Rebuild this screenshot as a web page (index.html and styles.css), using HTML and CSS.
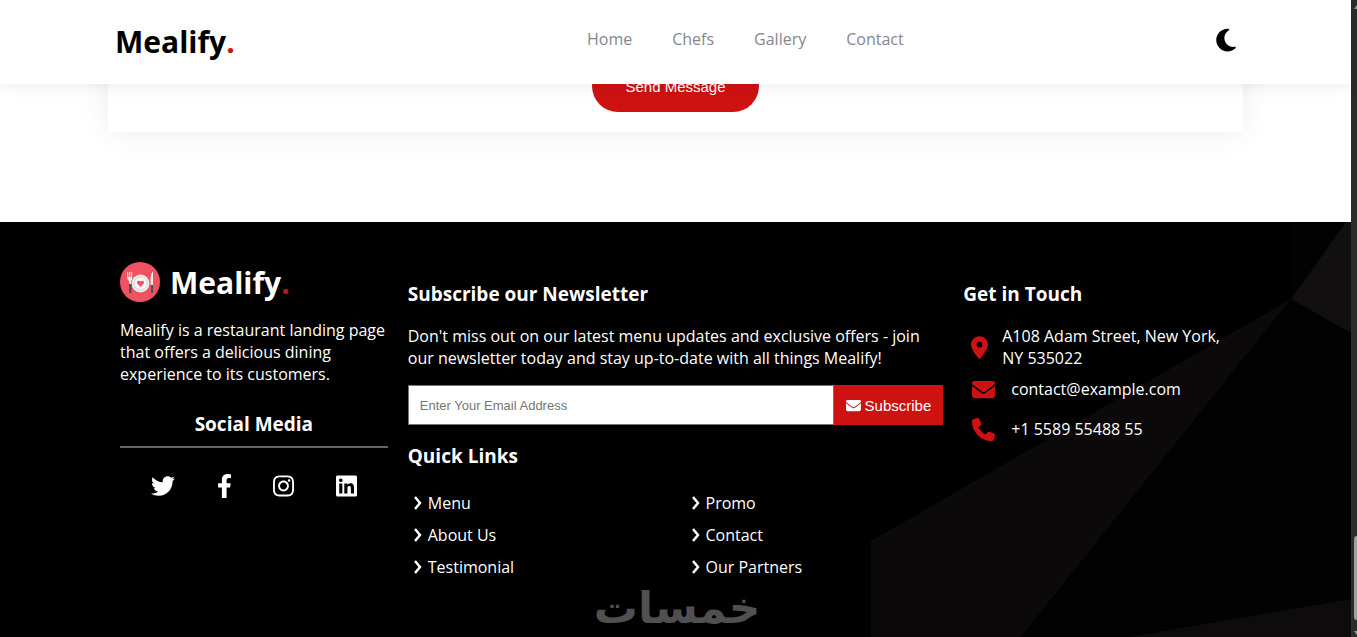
FILE: index.html
```html
<!DOCTYPE html>
<html lang="en">
<head>
<meta charset="utf-8">
<meta name="viewport" content="width=device-width, initial-scale=1">
<title>Mealify</title>
<link rel="stylesheet" href="styles.css">
</head>
<body>
<div class="page">
  <header class="header">
    <a class="brand" href="#home">Mealify<span class="dot">.</span></a>
    <nav class="nav">
      <a href="#home">Home</a>
      <a href="#chefs">Chefs</a>
      <a href="#gallery">Gallery</a>
      <a href="#contact">Contact</a>
    </nav>
    <button class="theme" type="button" aria-label="Dark mode">
      <svg viewBox="0 0 384 512" width="20" height="26"><path d="M223.5 32C100 32 0 132.3 0 256S100 480 223.500 480c60.600 0 115.500-24.200 155.800-63.400c5-4.900 6.300-12.500 3.100-18.700s-10.100-9.700-17-8.500c-9.800 1.700-19.800 2.600-30.100 2.600c-96.900 0-175.500-78.800-175.500-176c0-65.800 36-123.100 89.300-153.300c6.100-3.500 9.200-10.500 7.700-17.300s-7.300-11.900-14.300-12.500c-6.300-.5-12.600-.8-19-.8z"/></svg>
    </button>
  </header>

  <main class="contact" id="contact">
    <form class="card"><button class="send" type="button">Send Message</button></form>
  </main>

  <footer class="footer">
    <svg class="facets" viewBox="0 0 480 415" preserveAspectRatio="xMaxYMin slice" aria-hidden="true">
      <path fill="#0b090a" d="M0 319L420 77L150 415H0z"/>
      <path fill="#020202" d="M420 0H475L420 77z"/>
      <path fill="#020202" d="M420 77L480 111V377L258 415H150z"/>
      <path fill="#110f10" d="M475 0H480V111L420 77z"/>
      <path fill="#0e0b0c" d="M480 377V415H258z"/>
    </svg>
    <div class="columns">
      <section class="about">
        <div class="about-brand">
          <svg viewBox="0 0 40 40" width="40" height="40" aria-hidden="true">
            <circle cx="20" cy="20" r="20" fill="#ef5261"/>
            <circle cx="20.500" cy="21.500" r="9" fill="#ededee"/>
            <circle cx="20.500" cy="21.500" r="6.500" fill="#f7f7f7" stroke="#c9c9cc" stroke-width="1" stroke-dasharray="2 1"/>
            <path fill="#ef5261" d="M20.500 25l-3-3.200c-1.700-2 1.200-4.300 3-2.200c1.800-2.100 4.700.2 3 2.200z"/>
            <path fill="#4e5258" d="M9 21h2.600v10H9zM31 22h2v9h-2z"/>
            <path fill="#eee" d="M7.200 10h1v5h1v-5h1v5h1v-5h1v6c0 2-.8 2.500-1 3v3H9.200v-3C8.500 18.500 7.200 17.500 7.200 16zM33 9.500V23h-2c-1-5-.5-11 2-13.500z"/>
          </svg>
          <a class="brand brand-light" href="#home">Mealify<span class="dot">.</span></a>
        </div>
        <p>Mealify is a restaurant landing page that offers a delicious dining experience to its customers.</p>
        <h3 class="social-title">Social Media</h3>
        <div class="social">
          <a href="#twitter" aria-label="Twitter"><svg viewBox="0 0 512 512" width="24" height="24"><path d="M459.370 151.716c.325 4.548.325 9.097.325 13.645 0 138.720-105.583 298.558-298.558 298.558-59.452 0-114.680-17.219-161.137-47.106 8.447.974 16.568 1.299 25.340 1.299 49.055 0 94.213-16.568 130.274-44.832-46.132-.975-84.792-31.188-98.112-72.772 6.498.974 12.995 1.624 19.818 1.624 9.421 0 18.843-1.300 27.614-3.573-48.081-9.747-84.143-51.980-84.143-102.985v-1.299c13.969 7.797 30.214 12.670 47.431 13.319-28.264-18.843-46.781-51.005-46.781-87.391 0-19.492 5.197-37.360 14.294-52.954 51.655 63.675 129.300 105.258 216.365 109.807-1.624-7.797-2.599-15.918-2.599-24.040 0-57.828 46.782-104.934 104.934-104.934 30.213 0 57.502 12.670 76.670 33.137 23.715-4.548 46.456-13.320 66.599-25.340-7.798 24.366-24.366 44.833-46.132 57.827 21.117-2.273 41.584-8.122 60.426-16.243-14.292 20.791-32.161 39.308-52.628 54.253z"/></svg></a>
          <a href="#facebook" aria-label="Facebook"><svg viewBox="0 0 320 512" width="15" height="24"><path d="M279.140 288l14.220-92.660h-88.910v-60.130c0-25.350 12.420-50.060 52.240-50.060h40.420V6.260S260.430 0 225.360 0c-73.220 0-121.080 44.380-121.080 124.720v70.620H22.890V288h81.390v224h100.170V288z"/></svg></a>
          <a href="#instagram" aria-label="Instagram"><svg viewBox="0 0 448 512" width="21" height="24"><path d="M224.100 141c-63.600 0-114.900 51.300-114.900 114.900s51.300 114.900 114.900 114.900S339 319.500 339 255.900 287.700 141 224.100 141zm0 189.600c-41.100 0-74.700-33.500-74.700-74.700s33.500-74.700 74.700-74.700 74.700 33.500 74.700 74.700-33.600 74.700-74.700 74.700zm146.400-194.300c0 14.900-12 26.800-26.800 26.800-14.900 0-26.800-12-26.800-26.800s12-26.800 26.800-26.800 26.800 12 26.800 26.800zm76.100 27.200c-1.700-35.900-9.900-67.700-36.200-93.900-26.200-26.200-58-34.400-93.900-36.200-37-2.100-147.900-2.100-184.900 0-35.800 1.700-67.600 9.900-93.900 36.100s-34.400 58-36.200 93.900c-2.100 37-2.100 147.900 0 184.900 1.700 35.900 9.900 67.700 36.200 93.900s58 34.400 93.900 36.200c37 2.100 147.900 2.100 184.900 0 35.900-1.700 67.700-9.900 93.900-36.200 26.200-26.200 34.400-58 36.200-93.900 2.100-37 2.100-147.800 0-184.800zM398.800 388c-7.800 19.600-22.900 34.700-42.600 42.600-29.500 11.700-99.500 9-132.100 9s-102.700 2.600-132.100-9c-19.600-7.800-34.700-22.900-42.600-42.600-11.700-29.500-9-99.500-9-132.100s-2.600-102.700 9-132.100c7.800-19.600 22.900-34.700 42.600-42.600 29.500-11.700 99.500-9 132.100-9s102.700-2.600 132.100 9c19.600 7.800 34.700 22.900 42.600 42.600 11.700 29.500 9 99.500 9 132.100s2.700 102.700-9 132.100z"/></svg></a>
          <a href="#linkedin" aria-label="LinkedIn"><svg viewBox="0 0 448 512" width="21" height="24"><path d="M416 32H31.900C14.300 32 0 46.500 0 64.300v383.400C0 465.500 14.300 480 31.900 480H416c17.600 0 32-14.500 32-32.300V64.300c0-17.800-14.400-32.300-32-32.300zM135.400 416H69V202.200h66.500V416zm-33.200-243c-21.300 0-38.500-17.300-38.500-38.500S80.900 96 102.200 96c21.200 0 38.500 17.300 38.500 38.500 0 21.300-17.200 38.500-38.500 38.500zm282.100 243h-66.400V312c0-24.800-.5-56.700-34.500-56.700-34.600 0-39.900 27-39.900 54.900V416h-66.400V202.200h63.700v29.200h.9c8.900-16.800 30.600-34.500 62.900-34.500 67.200 0 79.700 44.300 79.700 101.900V416z"/></svg></a>
        </div>
      </section>

      <section class="middle">
        <h3>Subscribe our Newsletter</h3>
        <p>Don't miss out on our latest menu updates and exclusive offers - join our newsletter today and stay up-to-date with all things Mealify!</p>
        <form class="subscribe">
          <input type="email" placeholder="Enter Your Email Address" aria-label="Email address">
          <button type="button"><svg viewBox="0 0 512 512" width="15" height="15" aria-hidden="true"><path d="M48 64C21.500 64 0 85.500 0 112c0 15.100 7.100 29.300 19.200 38.400L236.800 313.600c11.400 8.500 27 8.500 38.400 0L492.800 150.400c12.100-9.100 19.200-23.300 19.200-38.400c0-26.500-21.500-48-48-48H48zM0 176V384c0 35.300 28.700 64 64 64H448c35.300 0 64-28.700 64-64V176L294.400 339.200c-22.800 17.100-54 17.100-76.800 0L0 176z"/></svg>Subscribe</button>
        </form>
        <h3>Quick Links</h3>
        <ul class="links">
          <li><a href="#menu"><svg viewBox="0 0 10 16"><path d="M2 2l5 6-5 6"/></svg>Menu</a></li>
          <li><a href="#promo"><svg viewBox="0 0 10 16"><path d="M2 2l5 6-5 6"/></svg>Promo</a></li>
          <li><a href="#about"><svg viewBox="0 0 10 16"><path d="M2 2l5 6-5 6"/></svg>About Us</a></li>
          <li><a href="#contact"><svg viewBox="0 0 10 16"><path d="M2 2l5 6-5 6"/></svg>Contact</a></li>
          <li><a href="#testimonial"><svg viewBox="0 0 10 16"><path d="M2 2l5 6-5 6"/></svg>Testimonial</a></li>
          <li><a href="#partners"><svg viewBox="0 0 10 16"><path d="M2 2l5 6-5 6"/></svg>Our Partners</a></li>
        </ul>
      </section>

      <section class="touch">
        <h3>Get in Touch</h3>
        <address class="address">
          <div class="place"><svg viewBox="0 0 384 512" width="17" height="23"><path d="M215.700 499.200C267 435 384 279.400 384 192C384 86 298 0 192 0S0 86 0 192c0 87.400 117 243 168.300 307.200c12.300 15.300 35.100 15.300 47.400 0zM192 128a64 64 0 1 1 0 128 64 64 0 1 1 0-128z"/></svg><span>A108 Adam Street, New York, NY 535022</span></div>
          <a class="line" href="mailto:contact@example.com"><svg viewBox="0 0 512 512" width="23" height="23"><path d="M48 64C21.500 64 0 85.500 0 112c0 15.100 7.100 29.300 19.200 38.400L236.800 313.600c11.400 8.500 27 8.500 38.400 0L492.800 150.400c12.100-9.100 19.200-23.300 19.200-38.400c0-26.500-21.500-48-48-48H48zM0 176V384c0 35.300 28.700 64 64 64H448c35.300 0 64-28.700 64-64V176L294.400 339.200c-22.800 17.100-54 17.100-76.800 0L0 176z"/></svg>contact@example.com</a>
          <a class="line" href="tel:+155895548855"><svg viewBox="0 0 512 512" width="23" height="23"><path d="M164.900 24.600c-7.700-18.600-28-28.500-47.400-23.200l-88 24C12.100 30.200 0 46 0 64C0 311.400 200.600 512 448 512c18 0 33.800-12.100 38.600-29.500l24-88c5.300-19.400-4.600-39.700-23.200-47.400l-96-40c-16.300-6.800-35.200-2.100-46.300 11.600L304.700 368C234.300 334.700 177.300 277.700 144 207.300L193.300 167c13.700-11.200 18.400-30 11.600-46.300l-40-96z"/></svg>+1 5589 55488 55</a>
        </address>
      </section>
    </div>
  </footer>
</div>
<div class="scrollbar" aria-hidden="true">
  <svg viewBox="0 0 6 6" width="6" height="6"><path d="M3 5L6 1V5z"/></svg>
  <span class="thumb"></span>
  <svg viewBox="0 0 6 6" width="6" height="6"><path d="M3 1H6V5z"/></svg>
</div>
<div class="watermark" lang="ar" dir="rtl">خمسات</div>
</body>
</html>
```
FILE: styles.css
```css
* { box-sizing: border-box; margin: 0; padding: 0; }
body {
  display: flex;
  height: 100vh;
  overflow: hidden;
  background: #fff;
  font: 16px/22px "Open Sans", "Noto Sans", sans-serif;
}
a { color: inherit; text-decoration: none; }
button { border: 0; cursor: pointer; }
svg { display: block; flex: none; fill: currentColor; }
.page { flex: 1; min-width: 0; display: flex; flex-direction: column; }

.header {
  position: sticky;
  top: 0;
  z-index: 2;
  display: flex;
  flex: none;
  align-items: center;
  justify-content: space-between;
  height: 84px;
  padding: 0 115px;
  background: #fff;
  box-shadow: 0 0 16px rgba(0, 0, 0, 0.1);
}
.brand { font-size: 30px; line-height: 42px; font-weight: 700; color: #000; }
.brand-light { padding-top: 2px; color: #fff; }
.dot { color: #ce1212; }
.nav { display: flex; gap: 40px; margin-left: 40px; padding-bottom: 6px; color: #86868f; }
.theme { padding-bottom: 4px; background: none; color: #000; }

.contact { flex: none; padding: 0 8% 90px; margin-top: -32px; }
.card {
  display: flex;
  justify-content: center;
  padding: 8px 30px 20px;
  background: #fff;
  box-shadow: 0 0 30px rgba(0, 0, 0, 0.08);
}
.send {
  width: 167px;
  height: 52px;
  border-radius: 26px;
  background: #ce1212;
  color: #fff;
  font: 15px "Liberation Sans", Arial, sans-serif;
}

.footer { position: relative; flex: 1; padding: 40px 120px; background: #000; color: #fff; }
.facets { position: absolute; top: 0; right: 0; width: 480px; height: 100%; }
.columns { position: relative; display: grid; grid-template-columns: 1fr 2fr 1fr; gap: 20px; }
h3 { font-size: 19px; line-height: 26px; font-weight: 700; }
.about-brand { display: flex; align-items: center; gap: 10px; height: 40px; margin-bottom: 17px; }
.social-title { margin-top: 26px; padding-bottom: 9px; border-bottom: 2px solid #666; text-align: center; }
.social { display: flex; justify-content: space-between; padding: 26px 31px 0; }
.middle, .touch { padding-top: 19px; }
.middle p { margin-top: 18px; }
.subscribe { display: flex; margin: 16px 0 18px; height: 40px; }
.subscribe input {
  flex: 1;
  min-width: 0;
  padding: 0 11px;
  border: 1px solid #767676;
  background: #fff;
  font: 13px "Liberation Sans", Arial, sans-serif;
}
.subscribe input::placeholder { color: #757575; }
.subscribe button {
  display: flex;
  align-items: center;
  gap: 4px;
  padding: 0 12px;
  background: #ce1212;
  color: #fff;
  font: 15px "Liberation Sans", Arial, sans-serif;
}
.links { display: grid; grid-template-columns: 1fr 1fr; gap: 10px 20px; margin-top: 23px; list-style: none; }
.links a { display: flex; align-items: center; gap: 5px; padding-left: 5px; }
.links svg { width: 10px; height: 16px; fill: none; stroke: currentColor; stroke-width: 2.500; }
.address { margin-top: 18px; font-style: normal; }
.address svg { color: #ce1212; }
.place { display: flex; align-items: center; gap: 14px; padding-left: 8px; }
.line { display: flex; align-items: center; gap: 16px; height: 40px; padding-left: 9px; }

.scrollbar {
  display: flex;
  flex-direction: column;
  justify-content: space-between;
  width: 6px;
  padding: 4px 0 1px;
  background: #2c2c2c;
  color: #9f9f9f;
}
.thumb { height: 84px; margin: auto 0 10px 3px; border-radius: 3px 0 0 3px; background: #9f9f9f; }
.watermark {
  position: absolute;
  bottom: 4px;
  left: 50%;
  width: 164px;
  margin-left: -82px;
  color: #505050;
  font: 700 44px/50px "DejaVu Sans", sans-serif;
  text-align: center;
}
```
